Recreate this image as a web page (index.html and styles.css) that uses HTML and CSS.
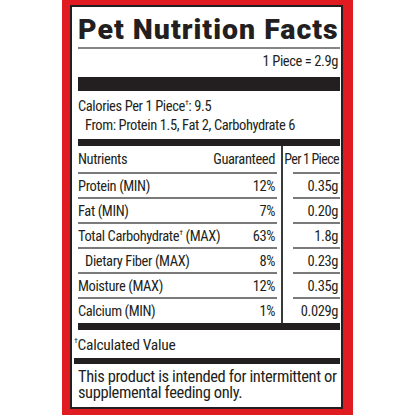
FILE: index.html
```html
<!DOCTYPE html>
<html>
  <head>
    <title>Pet Nutrition Facts</title>
    <link rel="stylesheet" href="styles.css">
  </head>
  <body>
    <div class="label">
      <div class="panel">
        <h1 class="title">Pet Nutrition Facts</h1>
        <div class="serving">1 Piece = 2.9g</div>

        <div class="calories">
          <div>Calories Per 1 Piece<sup>†</sup>: 9.5</div>
          <div class="indent">From: Protein 1.5, Fat 2, Carbohydrate 6</div>
        </div>

        <div class="facts">
          <div class="facts-left">
            <div class="row head"><span>Nutrients</span><span>Guaranteed</span></div>
            <div class="row"><span>Protein (MIN)</span><span>12%</span></div>
            <div class="row"><span>Fat (MIN)</span><span>7%</span></div>
            <div class="row"><span>Total Carbohydrate<sup>†</sup> (MAX)</span><span>63%</span></div>
            <div class="row"><span class="indent">Dietary Fiber (MAX)</span><span>8%</span></div>
            <div class="row"><span>Moisture (MAX)</span><span>12%</span></div>
            <div class="row last"><span>Calcium (MIN)</span><span>1%</span></div>
          </div>
          <div class="facts-right">
            <div class="cell head">Per 1 Piece</div>
            <div class="cell">0.35g</div>
            <div class="cell">0.20g</div>
            <div class="cell">1.8g</div>
            <div class="cell">0.23g</div>
            <div class="cell">0.35g</div>
            <div class="cell last">0.029g</div>
          </div>
        </div>

        <div class="footnote"><sup>†</sup>Calculated Value</div>

        <p class="note">This product is intended for intermittent or supplemental feeding only.</p>
      </div>
    </div>
  </body>
</html>
```
FILE: styles.css
```css
body {
  margin: 0;
  background: #fff;
  color: #231f20;
  font-family: Roboto, "Liberation Sans", sans-serif;
  font-stretch: 75%;
  font-size: 14.5px;
  letter-spacing: -0.4px;
  line-height: 19px;
}

.label {
  margin-left: 62px;
  width: 291px;
  height: 415px;
  box-sizing: border-box;
  padding: 5px 10px 6px 8px;
  background: #e11b22;
}

.panel {
  height: 100%;
  box-sizing: border-box;
  border: 2px solid #231f20;
  background: #fff;
  padding: 0 1px 0 6px;
}

.title {
  margin: 0;
  padding: 8px 0 2px;
  font-size: 28.5px;
  line-height: 30px;
  font-weight: 900;
  font-stretch: 100%;
  letter-spacing: 1px;
  white-space: nowrap;
  border-bottom: 2px solid #858585;
}

.serving {
  text-align: right;
  padding: 3px 2px 6px 0;
  border-bottom: 14px solid #231f20;
}

.calories {
  padding: 6px 0 4px;
  border-bottom: 7px solid #231f20;
}

.indent {
  padding-left: 7px;
}

sup {
  font-size: 8px;
  line-height: 0;
  vertical-align: 6px;
}

.facts {
  display: flex;
  border-bottom: 7px solid #231f20;
}

.facts-left {
  flex: none;
  width: 199px;
  margin-right: 4px;
}

.row {
  display: flex;
  justify-content: space-between;
  padding: 3px 2px 1px 0;
  border-bottom: 2px solid #7a7a7a;
}

.row.head,
.cell.head {
  padding-top: 4px;
  padding-bottom: 3px;
}

.facts-right {
  flex: 1;
  min-width: 0;
  border-left: 2px solid #3a3a3a;
  padding-left: 10px;
}

.cell {
  display: flex;
  justify-content: flex-end;
  white-space: nowrap;
  padding: 3px 2px 1px 0;
  border-bottom: 2px solid #7a7a7a;
}

.cell.head {
  padding-right: 1px;
  font-size: 14px;
  letter-spacing: -0.6px;
  word-spacing: -0.5px;
}

.row.last,
.cell.last {
  border-bottom: none;
  padding-bottom: 2px;
}

.facts-right .cell.last {
  padding-bottom: 0;
}

.footnote {
  margin-left: -4px;
  padding: 6px 0 3px;
  font-size: 15.5px;
  letter-spacing: -0.3px;
  border-bottom: 6px solid #231f20;
}

.footnote sup {
  vertical-align: 7px;
}

.note {
  margin: 0;
  padding-top: 5px;
  font-size: 16.5px;
  letter-spacing: -0.4px;
  line-height: 16px;
}
```
